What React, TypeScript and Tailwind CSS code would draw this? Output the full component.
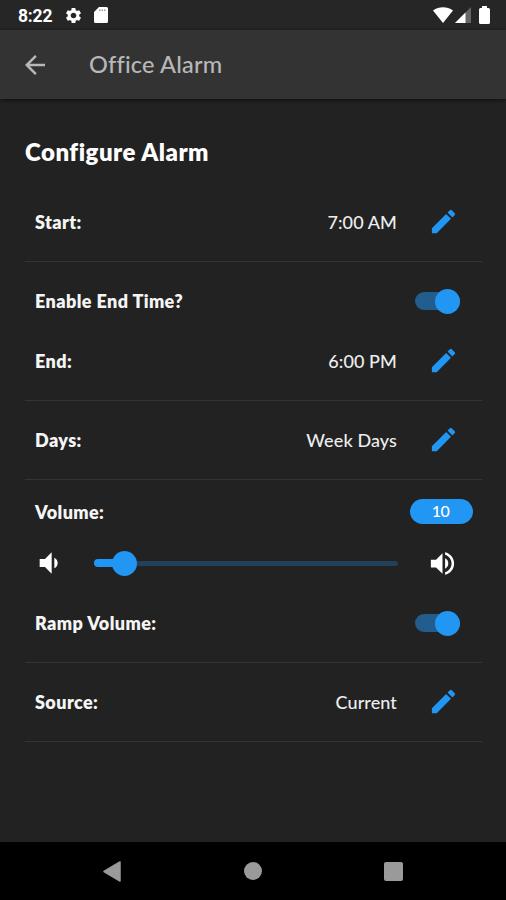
import type { ReactNode } from "react";
import { MdArrowBack, MdEdit, MdSettings, MdVolumeDown, MdVolumeUp } from "react-icons/md";

function StatusBar() {
  return (
    <div className="flex h-[30px] shrink-0 items-center bg-[#262626] pl-[18px] pr-[16px] text-white">
      <span className="w-[46px] pt-[3px] font-['Roboto',sans-serif] text-[17.5px] font-bold leading-none tracking-[-0.2px]">8:22</span>
      <MdSettings className="size-[19px]" />
      <svg viewBox="0 0 14 16" className="ml-[11px] h-4 w-3.5">
        <path d="M5 0h7.500A1.500 1.500 0 0 1 14 1.500v13a1.500 1.500 0 0 1-1.500 1.500h-11A1.500 1.500 0 0 1 0 14.500V5z" fill="white" />
        <path d="M5 2.500h1.500v1.500H5zM7.500 2.500H9v1.500H7.500zM10 2.500h1.500v1.500H10z" fill="#999" />
      </svg>
      <svg viewBox="0 0 20 16" className="ml-auto h-4 w-5">
        <path d="M0 3.500C6-.7 14-.7 20 3.500L10 16z" fill="white" />
      </svg>
      <svg viewBox="0 0 16 16" className="ml-[2px] h-4 w-4">
        <path d="M16 0v16H0z" fill="#666" />
        <path d="M10.500 5.500V16H0z" fill="white" />
      </svg>
      <svg viewBox="0 0 11 18" className="ml-[8px] h-[18px] w-[11px]">
        <path d="M3 0h5v2h1.500A1.500 1.500 0 0 1 11 3.500v13A1.500 1.500 0 0 1 9.500 18h-8A1.500 1.500 0 0 1 0 16.500v-13A1.500 1.500 0 0 1 1.500 2H3z" fill="white" />
      </svg>
    </div>
  );
}

function Row({ label, height = "h-[60px]", children }: { label: string; height?: string; children: ReactNode }) {
  return (
    <div className={`flex items-center justify-between pl-[10px] ${height}`}>
      <span className="whitespace-nowrap text-[18px] font-extrabold leading-6 tracking-[0.4px] text-[#f5f5f5]">{label}</span>
      {children}
    </div>
  );
}

function Editable({ value }: { value: string }) {
  return (
    <div className="flex items-center pr-[23.5px]">
      <span className="whitespace-nowrap text-[18px] font-medium leading-6 tracking-[0.1px] text-[#eee]">{value}</span>
      <button className="mb-px ml-[30.5px]" aria-label="Edit">
        <MdEdit className="size-[31px] text-[#2196f3]" />
      </button>
    </div>
  );
}

function Toggle() {
  return (
    <button role="switch" aria-checked="true" className="mr-[22px] flex h-[18px] w-[45px] items-center justify-end rounded-full bg-[#225d8e]">
      <span className="size-[25px] shrink-0 rounded-full bg-[#2196f3]" />
    </button>
  );
}

export default function App() {
  return (
    <div className="flex h-[900px] w-[506px] flex-col overflow-hidden bg-[#222] font-['Lato',sans-serif]">
      <StatusBar />
      <header className="flex h-[69px] shrink-0 items-center bg-[#333] pl-[20px] text-[#b8b8b8] shadow-[0_1px_4px_rgba(0,0,0,0.6)]">
        <MdArrowBack className="size-[30px]" />
        <h1 className="mb-px ml-[39px] text-[23.5px] font-medium leading-8 tracking-[0.2px]">Office Alarm</h1>
      </header>
      <main className="flex-1 pl-[25px] pr-6">
        <h2 className="mt-[37px] h-[47px] whitespace-nowrap text-[24px] font-extrabold leading-8 tracking-[0.5px] text-white">Configure Alarm</h2>
        <section className="border-b border-[#343434]">
          <Row label="Start:" height="h-[78px]">
            <Editable value="7:00 AM" />
          </Row>
        </section>
        <section className="border-b border-[#343434] py-[9px]">
          <Row label="Enable End Time?">
            <Toggle />
          </Row>
          <Row label="End:">
            <Editable value="6:00 PM" />
          </Row>
        </section>
        <section className="border-b border-[#343434]">
          <Row label="Days:" height="h-[78px]">
            <Editable value="Week Days" />
          </Row>
        </section>
        <section className="border-b border-[#343434] pb-[9px] pt-[10px]">
          <Row label="Volume:" height="h-[43px]">
            <span className="mr-[9px] flex h-[25px] w-[63px] items-center justify-center rounded-full bg-[#2196f3] pb-px pr-[2px] text-base font-medium leading-none tracking-[-0.5px] text-white">10</span>
          </Row>
          <div className="flex h-[60px] items-center pl-[8px] pr-6 text-white">
            <MdVolumeDown className="size-8" />
            <div className="ml-[29px] flex flex-1 items-center">
              <div className="h-2 w-[22px] rounded-l-full bg-[#2196f3]" />
              <div className="-ml-1 size-[25px] rounded-full bg-[#2196f3]" />
              <div className="h-[5px] flex-1 rounded-r-full bg-[#22405a]" />
            </div>
            <MdVolumeUp className="ml-[29px] size-[31px]" />
          </div>
          <Row label="Ramp Volume:">
            <Toggle />
          </Row>
        </section>
        <section className="border-b border-[#343434]">
          <Row label="Source:" height="h-[78px]">
            <Editable value="Current" />
          </Row>
        </section>
      </main>
      <nav className="flex h-[58px] shrink-0 items-center bg-black pl-[103px]">
        <svg viewBox="0 0 18 21" className="h-[21px] w-[18px]">
          <path d="M17 1v19L1 10.500z" fill="#9a9a9a" stroke="#9a9a9a" strokeWidth="1.500" strokeLinejoin="round" />
        </svg>
        <span className="ml-[123px] size-[18px] rounded-full bg-[#9a9a9a]" />
        <span className="ml-[122px] size-[19px] rounded-[2px] bg-[#9a9a9a]" />
      </nav>
    </div>
  );
}
